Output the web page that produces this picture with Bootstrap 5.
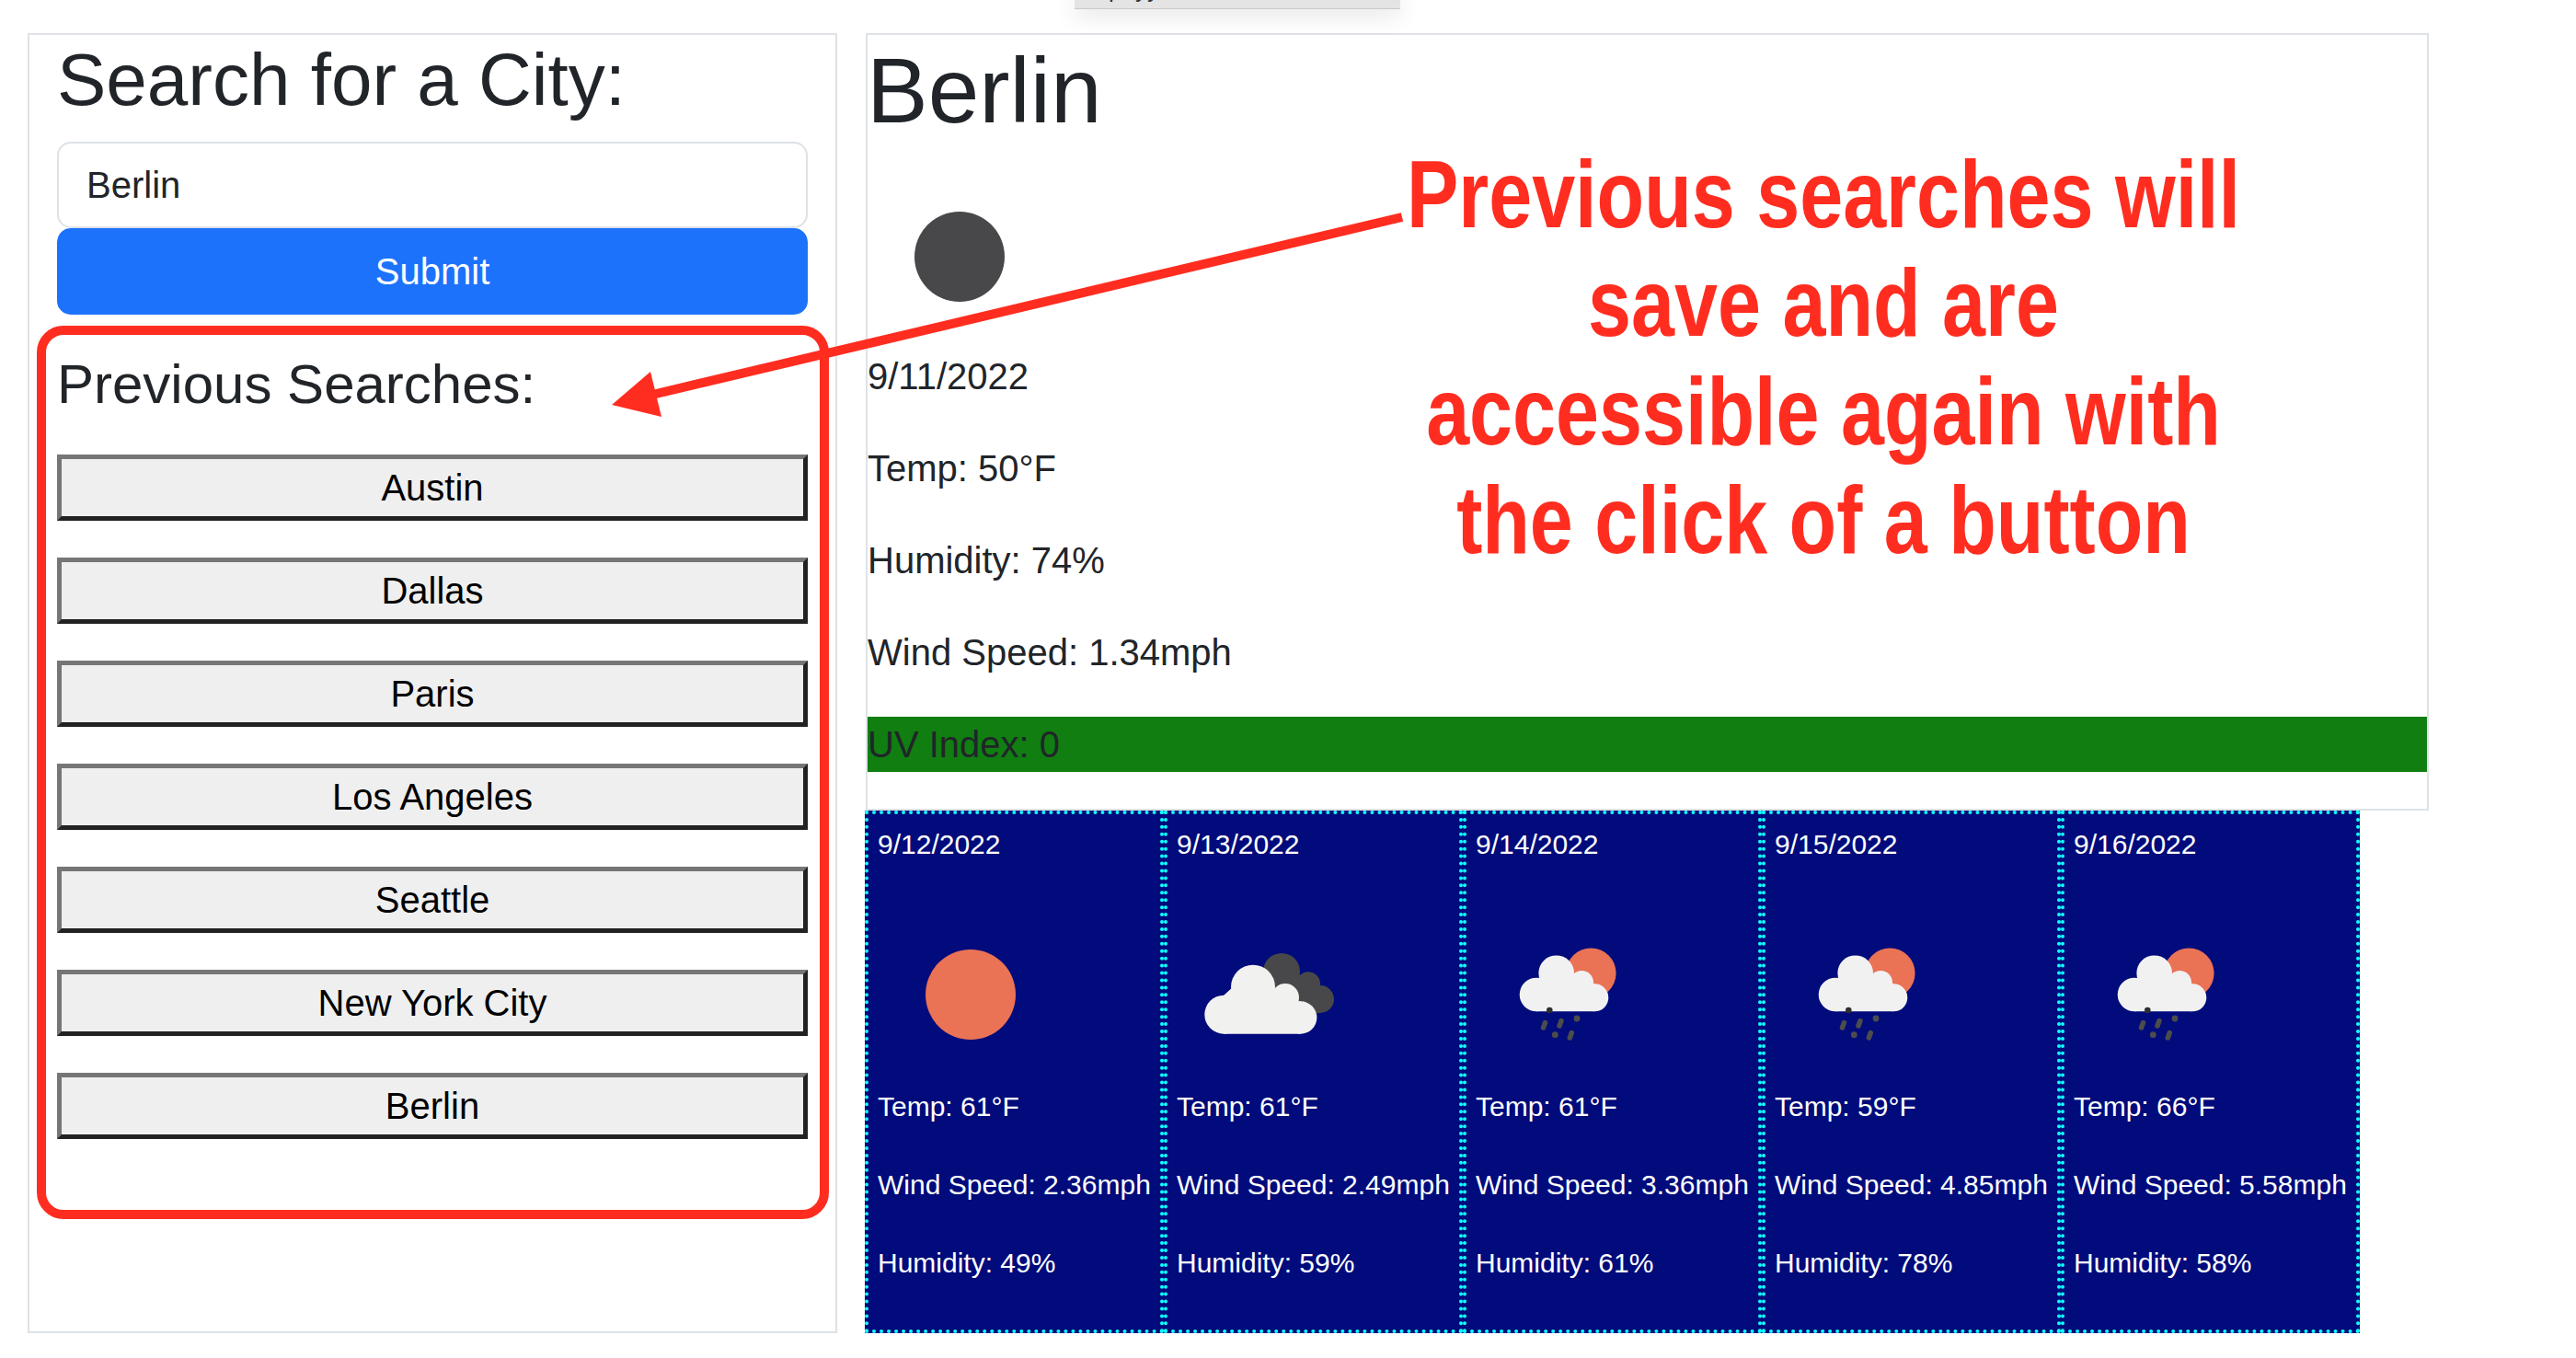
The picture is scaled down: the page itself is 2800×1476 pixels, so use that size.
<!DOCTYPE html>
<html lang="en">
<head>
  <meta charset="UTF-8" />
  <meta name="viewport" content="width=device-width, initial-scale=1" />
  <title>Weather Dashboard</title>
  <link href="https://cdn.jsdelivr.net/npm/bootstrap@5.3.0/dist/css/bootstrap.min.css" rel="stylesheet" />
  <style>
    html {
      font-size: 40px;
    }
    :root {
      --bs-border-width: 2px;
      --bs-body-font-family: "Liberation Sans", Arial, sans-serif;
    }
    .page-wrap {
      padding: 36px 0 0 30px;
      gap: 31px;
    }
    .search-panel {
      width: 880px;
      padding: 1px 30px 0;
    }
    .search-panel h2 {
      margin-bottom: 19px;
    }
    .search-panel h4 {
      margin-bottom: 21px;
    }
    .result-col {
      width: 1699px;
    }
    .result-col h1 {
      margin: 0 0 21px -1px;
    }
    .submit-btn {
      --bs-btn-bg: #1d72fb;
      --bs-btn-border-color: #1d72fb;
    }
    .city-btn {
      height: 72px;
      padding: 1px 6px;
      background: #efefef;
      color: #000;
      border-style: solid;
      border-width: 5px;
      border-color: #767676 #222 #222 #767676;
    }
    .uv-bar {
      background: #107e10;
    }
    .forecast-row {
      margin-left: -1px;
    }
    .forecast-day {
      width: 325px;
      padding: 10px;
      background: #010b7b;
      color: #fff;
      border: 4px dotted #10ffff;
      font-size: 30px;
      white-space: nowrap;
    }
    .weather-pic {
      display: block;
      width: 200px;
      height: 200px;
    }
    .forecast-day .weather-pic {
      margin-left: 1px;
      position: relative;
      top: 1px;
    }
    .note-layer {
      top: 0;
      left: 0;
      pointer-events: none;
    }
    .note-text {
      top: 153px;
      left: 1382px;
      width: 1200px;
      font-size: 103px;
      line-height: 118px;
      font-weight: 700;
      color: #ff2d20;
      white-space: nowrap;
      transform: scaleX(0.82);
    }
    .popup-edge {
      top: 0;
      left: 1168px;
      width: 354px;
      height: 10px;
      background: #e4e4e4;
      border-bottom: 1px solid #c9c9c9;
      box-shadow: 0 4px 24px rgba(0,0,0,0.18);
      overflow: hidden;
      font-size: 26px;
      line-height: 30px;
      white-space: pre;
      padding-left: 37px;
    }
    .popup-edge span {
      display: block;
      margin-top: -27px;
      color: #333;
    }
  </style>
</head>
<body class="position-relative">
  <svg width="0" height="0" class="position-absolute">
    <symbol id="icon-clouds" viewBox="0 0 200 200">
      <g fill="#48484a">
        <circle cx="113" cy="75" r="20" />
        <circle cx="142" cy="88.3" r="13" />
        <circle cx="155" cy="105" r="15" />
        <path d="M101 70 L126 75 L152 90 L155 120 L120 125 Z" />
      </g>
      <g fill="#f1f1f0">
        <circle cx="50.3" cy="121.7" r="21" />
        <circle cx="82" cy="91.7" r="24" />
        <circle cx="117" cy="103" r="15" />
        <circle cx="133.7" cy="125" r="17.7" />
        <path d="M50 142.7 V101 L62 90 H102 L120 108 L134 107.3 V142.7 Z" />
      </g>
    </symbol>
    <symbol id="icon-rain" viewBox="0 0 200 200">
      <circle cx="124.3" cy="76.7" r="27.3" fill="#ea7255" />
      <g fill="#f1f1f1">
        <circle cx="65" cy="100" r="18.3" />
        <circle cx="86.7" cy="76.7" r="19.3" />
        <circle cx="114.3" cy="86.7" r="12.7" />
        <circle cx="128.3" cy="103.3" r="15" />
        <path d="M65 118.3 V82 H114 L128 88.3 V118.3 Z" />
      </g>
      <circle cx="79.3" cy="117" r="3.3" fill="#2f2f2f" />
      <g stroke="#4c4c4c" stroke-width="5.5" stroke-linecap="round">
        <path d="M72.5 136 L74.5 130.5" />
        <path d="M90 134 L92 128.5" />
        <path d="M101.3 147 L103.3 141.5" />
      </g>
      <g fill="#4c4c4c">
        <circle cx="109" cy="126" r="3.4" />
        <circle cx="85.3" cy="143.7" r="3.4" />
      </g>
    </symbol>
  </svg>

  <div class="d-flex align-items-stretch page-wrap">
    <div class="border search-panel">
      <h2 class="fw-normal">Search for a City:</h2>
      <input type="text" class="form-control" value="Berlin" />
      <button type="button" class="btn btn-primary submit-btn w-100">Submit</button>
      <h4 class="fw-normal mt-3">Previous Searches:</h4>
      <div class="d-grid gap-3 mt-3">
        <button type="button" class="city-btn">Austin</button>
        <button type="button" class="city-btn">Dallas</button>
        <button type="button" class="city-btn">Paris</button>
        <button type="button" class="city-btn">Los Angeles</button>
        <button type="button" class="city-btn">Seattle</button>
        <button type="button" class="city-btn">New York City</button>
        <button type="button" class="city-btn">Berlin</button>
      </div>
    </div>

    <div class="result-col">
      <div class="border">
        <h1 class="fw-normal">Berlin</h1>
        <svg class="weather-pic" viewBox="0 0 200 200"><circle cx="100" cy="100" r="49" fill="#48484a" /></svg>
        <p>9/11/2022</p>
        <p>Temp: 50°F</p>
        <p>Humidity: 74%</p>
        <p>Wind Speed: 1.34mph</p>
        <p class="uv-bar">UV Index: 0</p>
      </div>
      <div class="d-flex forecast-row">
        <div class="forecast-day">
          <p>9/12/2022</p>
          <svg class="weather-pic" viewBox="0 0 200 200"><circle cx="100" cy="100" r="49" fill="#ea7255" /></svg>
          <p>Temp: 61°F</p>
          <p>Wind Speed: 2.36mph</p>
          <p>Humidity: 49%</p>
        </div>
        <div class="forecast-day">
          <p>9/13/2022</p>
          <svg class="weather-pic"><use href="#icon-clouds" /></svg>
          <p>Temp: 61°F</p>
          <p>Wind Speed: 2.49mph</p>
          <p>Humidity: 59%</p>
        </div>
        <div class="forecast-day">
          <p>9/14/2022</p>
          <svg class="weather-pic"><use href="#icon-rain" /></svg>
          <p>Temp: 61°F</p>
          <p>Wind Speed: 3.36mph</p>
          <p>Humidity: 61%</p>
        </div>
        <div class="forecast-day">
          <p>9/15/2022</p>
          <svg class="weather-pic"><use href="#icon-rain" /></svg>
          <p>Temp: 59°F</p>
          <p>Wind Speed: 4.85mph</p>
          <p>Humidity: 78%</p>
        </div>
        <div class="forecast-day">
          <p>9/16/2022</p>
          <svg class="weather-pic"><use href="#icon-rain" /></svg>
          <p>Temp: 66°F</p>
          <p>Wind Speed: 5.58mph</p>
          <p>Humidity: 58%</p>
        </div>
      </div>
    </div>
  </div>

  <!-- annotation drawn over the page -->
  <div class="position-absolute popup-edge"><span>p  yy</span></div>
  <svg class="position-absolute note-layer" width="2800" height="1476">
    <rect x="45" y="359" width="851" height="961" rx="24" fill="none" stroke="#ff2d20" stroke-width="10" />
    <line x1="1524" y1="236" x2="709" y2="429" stroke="#ff2d20" stroke-width="10" />
    <polygon points="665,440 707,404 719,453" fill="#ff2d20" />
  </svg>
  <div class="position-absolute text-center note-text">Previous searches will<br />save and are<br />accessible again with<br />the click of a button</div>

  <script src="https://cdn.jsdelivr.net/npm/bootstrap@5.3.0/dist/js/bootstrap.bundle.min.js"></script>
</body>
</html>
